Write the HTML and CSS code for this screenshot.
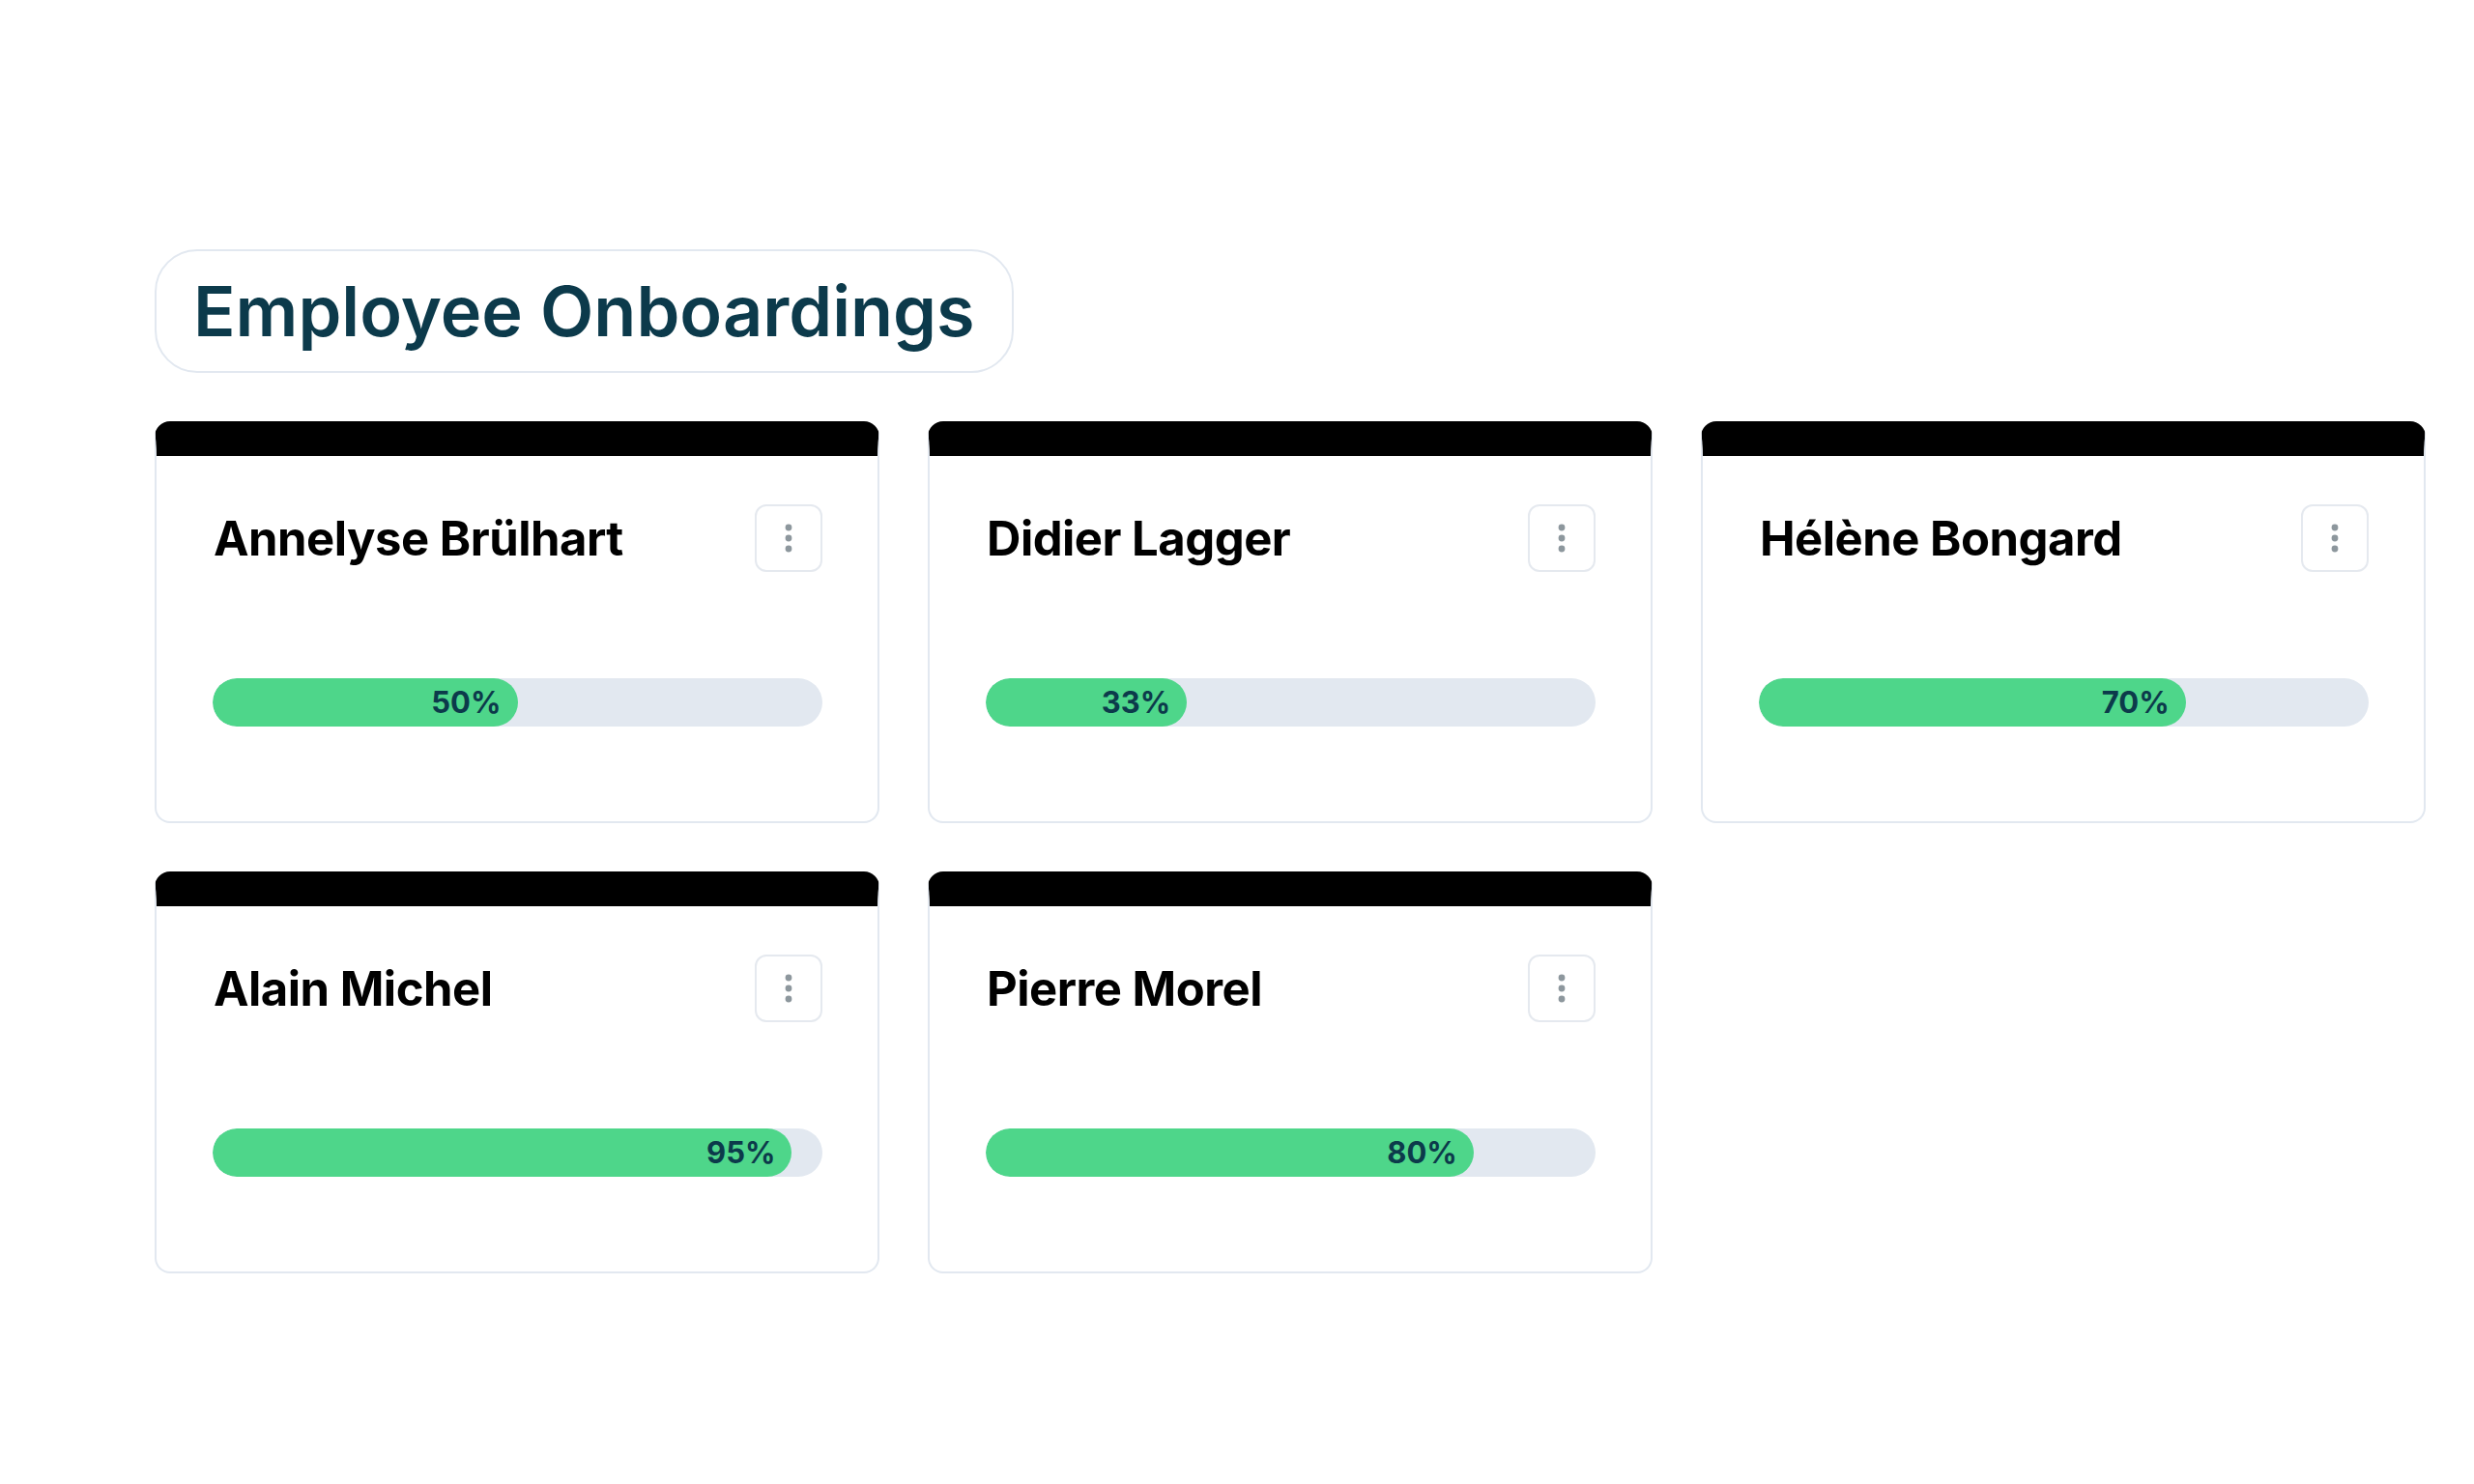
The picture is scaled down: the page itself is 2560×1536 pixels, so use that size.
FILE: index.html
```html
<!DOCTYPE html>
<html lang="en">
<head>
    <meta charset="UTF-8">
    <meta name="viewport" content="width=device-width, initial-scale=1.0">
    <title>Employee Onboardings</title>
    <link rel="stylesheet" href="styles.css">
</head>
<body>

    <main class="page">
        <div class="title-pill">
            <h1>Employee Onboardings</h1>
        </div>

        <section class="card-grid">
            <!-- Card: Annelyse -->
            <article class="card">
                <div class="card-head">
                    <h2 class="card-name">Annelyse Brülhart</h2>
                    <button class="menu-btn" type="button" aria-label="More options">
                        <svg width="8" height="30" viewBox="0 0 8 30"><circle cx="4" cy="4" r="3.4"/><circle cx="4" cy="15" r="3.4"/><circle cx="4" cy="26" r="3.4"/></svg>
                    </button>
                </div>
                <div class="progress">
                    <div class="progress-fill" style="width: 50%"><span>50%</span></div>
                </div>
            </article>

            <!-- Card: Didier -->
            <article class="card">
                <div class="card-head">
                    <h2 class="card-name">Didier Lagger</h2>
                    <button class="menu-btn" type="button" aria-label="More options">
                        <svg width="8" height="30" viewBox="0 0 8 30"><circle cx="4" cy="4" r="3.4"/><circle cx="4" cy="15" r="3.4"/><circle cx="4" cy="26" r="3.4"/></svg>
                    </button>
                </div>
                <div class="progress">
                    <div class="progress-fill" style="width: 33%"><span>33%</span></div>
                </div>
            </article>

            <!-- Card: Hélène -->
            <article class="card">
                <div class="card-head">
                    <h2 class="card-name">Hélène Bongard</h2>
                    <button class="menu-btn" type="button" aria-label="More options">
                        <svg width="8" height="30" viewBox="0 0 8 30"><circle cx="4" cy="4" r="3.4"/><circle cx="4" cy="15" r="3.4"/><circle cx="4" cy="26" r="3.4"/></svg>
                    </button>
                </div>
                <div class="progress">
                    <div class="progress-fill" style="width: 70%"><span>70%</span></div>
                </div>
            </article>

            <!-- Card: Alain -->
            <article class="card">
                <div class="card-head">
                    <h2 class="card-name">Alain Michel</h2>
                    <button class="menu-btn" type="button" aria-label="More options">
                        <svg width="8" height="30" viewBox="0 0 8 30"><circle cx="4" cy="4" r="3.4"/><circle cx="4" cy="15" r="3.4"/><circle cx="4" cy="26" r="3.4"/></svg>
                    </button>
                </div>
                <div class="progress">
                    <div class="progress-fill" style="width: 95%"><span>95%</span></div>
                </div>
            </article>

            <!-- Card: Pierre -->
            <article class="card">
                <div class="card-head">
                    <h2 class="card-name">Pierre Morel</h2>
                    <button class="menu-btn" type="button" aria-label="More options">
                        <svg width="8" height="30" viewBox="0 0 8 30"><circle cx="4" cy="4" r="3.4"/><circle cx="4" cy="15" r="3.4"/><circle cx="4" cy="26" r="3.4"/></svg>
                    </button>
                </div>
                <div class="progress">
                    <div class="progress-fill" style="width: 80%"><span>80%</span></div>
                </div>
            </article>
        </section>
    </main>

</body>
</html>
```

FILE: styles.css
```css
/* Base */
body {
    font-family: Inter, 'Liberation Sans', Arial, sans-serif;
    background-color: #ffffff;
    color: #000;
    margin: 0;
    padding: 0;
}

* {
    box-sizing: border-box;
}

/* Page wrapper */
.page {
    padding: 258px 50px 0 160px;
}

/* Title pill */
.title-pill {
    display: inline-block;
    padding: 0 38px;
    height: 128px;
    border: 2px solid #e2e8f0;
    border-radius: 44px;
}

.title-pill h1 {
    margin: 0;
    line-height: 124px;
    font-size: 72px;
    font-weight: 600;
    letter-spacing: 0;
    color: #0c3a4b;
}

/* Cards */
.card-grid {
    display: grid;
    grid-template-columns: repeat(3, 750px);
    gap: 50px;
    margin-top: 50px;
}

.card {
    border: 2px solid #e2e8f0;
    border-top: 36px solid #000;
    border-radius: 16px;
    padding: 50px 57px 98px 58px;
}

.card-head {
    display: flex;
    align-items: center;
    justify-content: space-between;
    height: 70px;
}

.card-name {
    margin: 0;
    padding-left: 1px;
    font-size: 49px;
    font-weight: 700;
    letter-spacing: -0.5px;
    color: #000;
}

/* Kebab button */
.menu-btn {
    width: 70px;
    height: 70px;
    border: 2px solid #e5e9ef;
    border-radius: 12px;
    background: #fff;
    display: flex;
    align-items: center;
    justify-content: center;
    padding: 0;
    cursor: pointer;
}

.menu-btn svg {
    fill: #8d979d;
}

/* Progress bar */
.progress {
    margin-top: 110px;
    height: 50px;
    border-radius: 25px;
    background-color: #e2e8f0;
    overflow: hidden;
}

.progress-fill {
    height: 100%;
    border-radius: 25px;
    background-color: #4ed68a;
    text-align: right;
    padding-right: 17px;
}

.progress-fill span {
    font-size: 31px;
    font-weight: 700;
    line-height: 50px;
    color: #0c3a4b;
}
```
